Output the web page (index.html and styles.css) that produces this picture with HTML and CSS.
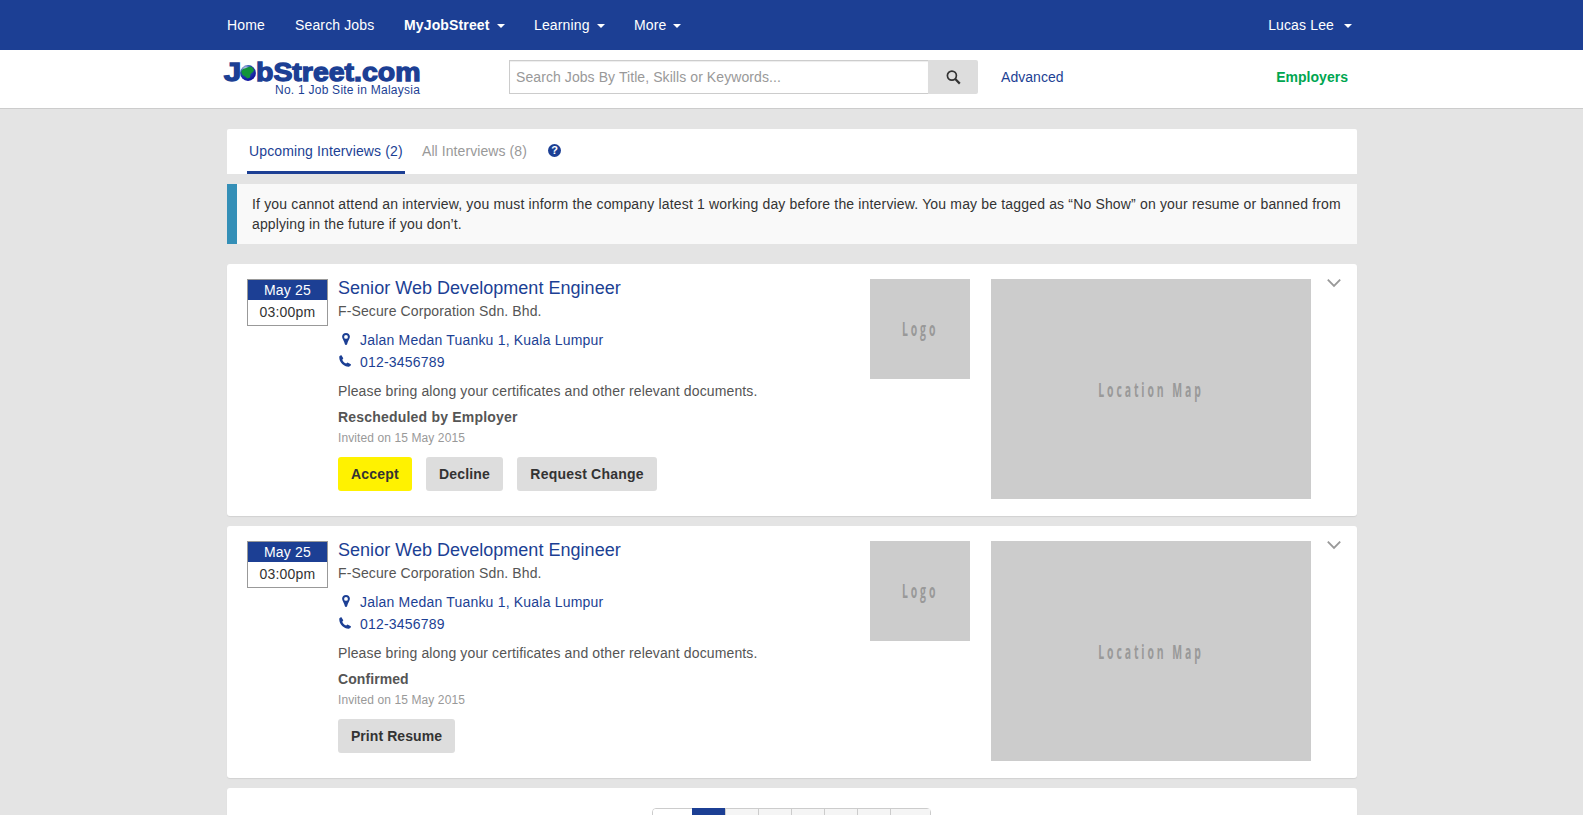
FILE: index.html
```html
<!DOCTYPE html>
<html lang="en">
<head>
<meta charset="utf-8">
<title>My Interviews - JobStreet.com</title>
<link rel="stylesheet" href="styles.css">
</head>
<body>
<svg class="defs" width="0" height="0">
  <symbol id="pin" viewBox="0 0 8 12"><path fill-rule="evenodd" d="M4 0C1.700 0 .1 1.700.1 3.800.1 6 2.300 7.800 2.900 11.300c.1.9 2.100.9 2.200 0C5.700 7.800 7.900 6 7.900 3.800 7.900 1.700 6.300 0 4 0zM4 2a1.900 1.900 0 1 1 0 3.800A1.900 1.900 0 0 1 4 2z"/></symbol>
  <symbol id="phone" viewBox="0 0 12 12"><path d="M.4 1.200 2.200.1 4.300 3.300 3.300 4.700c.5 1.600 2 3.100 3.900 3.800l1.300-1.100L11.900 9.300c.2 1.100-.9 2.200-2 2.400C5 12-.6 6.400.4 1.200z"/></symbol>
  <symbol id="chevron" viewBox="0 0 14 9"><path d="M.8.6 7 6.900 13.200.6" fill="none" stroke="#999" stroke-width="1.800"/></symbol>
</svg>
<nav class="topbar">
  <div class="wrap topbar-row">
    <a class="nav home">Home</a>
    <a class="nav search-jobs">Search Jobs</a>
    <a class="nav mine">MyJobStreet<i class="caret"></i></a>
    <a class="nav learning">Learning<i class="caret"></i></a>
    <a class="nav more">More<i class="caret"></i></a>
    <a class="nav user">Lucas Lee<i class="caret"></i></a>
  </div>
</nav>
<header class="header">
  <div class="wrap header-row">
    <svg class="brand" width="200" height="40" viewBox="0 0 200 40">
      <defs><radialGradient id="sea" cx=".35" cy=".25" r=".8"><stop offset="0" stop-color="#dfe8f5"/><stop offset=".4" stop-color="#2a4fae"/><stop offset="1" stop-color="#0a0a9c"/></radialGradient></defs>
      <g class="brand-name"><text x=".7" y="22.700" textLength="17.500" lengthAdjust="spacingAndGlyphs">J</text><text x="33" y="22.700" textLength="164.500" lengthAdjust="spacingAndGlyphs">bStreet.com</text></g>
      <circle cx="25" cy="15" r="7.900" fill="url(#sea)"/>
      <path d="M18.200 13.500 20 11l3-1 4-1.500 2.500 1 1.500 3-1.500 2-2 1.500-.5 3.500-2.500 1-3-2.500-2-1z" fill="#12953a"/>
      <text class="brand-tag" x="52" y="36.300" textLength="145">No. 1 Job Site in Malaysia</text>
    </svg>
    <div class="search">
      <span class="search-input">Search Jobs By Title, Skills or Keywords...</span>
      <span class="search-btn"><svg width="15" height="15" viewBox="0 0 15 15" fill="none" stroke="#333"><circle cx="5.900" cy="5.600" r="4.500" stroke-width="1.700"/><path d="M9 8.800 13.800 13.600" stroke-width="2.200"/></svg></span>
    </div>
    <a class="advanced">Advanced</a>
    <a class="employers">Employers</a>
  </div>
</header>
<main class="wrap">
  <div class="tabs">
    <a class="tab active">Upcoming Interviews (2)</a>
    <a class="tab">All Interviews (8)</a>
    <span class="help">?</span>
  </div>
  <p class="notice">If you cannot attend an interview, you must inform the company latest 1 working day before the interview. You may be tagged as “No Show” on your resume or banned from<br><span class="notice-end">applying in the future if you don’t.</span></p>

  <section class="card">
    <div class="date"><b class="day">May 25</b><span class="time">03:00pm</span></div>
    <div class="info">
      <h2 class="title">Senior Web Development Engineer</h2>
      <div class="company">F-Secure Corporation Sdn. Bhd.</div>
      <a class="contact place"><span class="ico"><svg width="8" height="12"><use href="#pin"/></svg></span>Jalan Medan Tuanku 1, Kuala Lumpur</a>
      <a class="contact tel"><span class="ico"><svg width="12" height="12"><use href="#phone"/></svg></span>012-3456789</a>
      <div class="note">Please bring along your certificates and other relevant documents.</div>
      <div class="status">Rescheduled by Employer</div>
      <div class="invited">Invited on 15 May 2015</div>
      <div class="actions"><button class="btn primary accept">Accept</button><button class="btn decline">Decline</button><button class="btn change">Request Change</button></div>
    </div>
    <div class="logo-box"><span class="ph">Logo</span></div>
    <div class="map-box"><span class="ph">Location Map</span></div>
    <svg class="toggle" width="14" height="9"><use href="#chevron"/></svg>
  </section>

  <section class="card">
    <div class="date"><b class="day">May 25</b><span class="time">03:00pm</span></div>
    <div class="info">
      <h2 class="title">Senior Web Development Engineer</h2>
      <div class="company">F-Secure Corporation Sdn. Bhd.</div>
      <a class="contact place"><span class="ico"><svg width="8" height="12"><use href="#pin"/></svg></span>Jalan Medan Tuanku 1, Kuala Lumpur</a>
      <a class="contact tel"><span class="ico"><svg width="12" height="12"><use href="#phone"/></svg></span>012-3456789</a>
      <div class="note">Please bring along your certificates and other relevant documents.</div>
      <div class="status confirmed">Confirmed</div>
      <div class="invited">Invited on 15 May 2015</div>
      <div class="actions"><button class="btn print">Print Resume</button></div>
    </div>
    <div class="logo-box"><span class="ph">Logo</span></div>
    <div class="map-box"><span class="ph">Location Map</span></div>
    <svg class="toggle" width="14" height="9"><use href="#chevron"/></svg>
  </section>

  <section class="card pager-card">
    <div class="pager"><i class="pg first"></i><i class="pg current"></i><i class="pg"></i><i class="pg"></i><i class="pg"></i><i class="pg"></i><i class="pg"></i><i class="pg last"></i></div>
  </section>
</main>
</body>
</html>
```
FILE: styles.css
```css
* { box-sizing: border-box; }
html { overflow: hidden; }
body { margin: 0; height: 815px; overflow: hidden; background: #e4e4e4; color: #333; font: 14px/20px "Liberation Sans", Arial, sans-serif; letter-spacing: .2px; }
.defs { display: block; }
.wrap { width: 1130px; margin-left: 227px; }

.topbar { height: 50px; background: #1c3f94; color: #fff; }
.topbar-row { display: flex; padding-top: 15px; letter-spacing: .14px; }
.nav { display: flex; align-items: center; white-space: nowrap; }
.home { width: 68px; }
.search-jobs { width: 109px; }
.mine { width: 130px; font-weight: bold; }
.learning { width: 100px; }
.user { margin-left: auto; padding-right: 5px; }
.user .caret { margin-left: 10px; }
.caret { margin: 2px 0 0 7px; border: 4px solid transparent; border-top-color: #fff; border-bottom: 0; }

.header { height: 59px; background: #fff; border-bottom: 1px solid #ccc; }
.header-row { display: flex; padding-top: 8px; }
.brand { margin-left: -4px; }
.brand-name { font-size: 26px; font-weight: bold; fill: #1c3f94; stroke: #1c3f94; stroke-width: 1.3px; letter-spacing: 0; }
.brand-tag { font-size: 12px; fill: #1c3f94; }
.search { display: flex; width: 469px; height: 34px; margin: 2px 0 0 86px; }
.search-input { flex: 1; padding: 6px; border: 1px solid #ccc; border-right: 0; color: #999; letter-spacing: .08px; box-shadow: inset 0 1px 1px rgba(0,0,0,.075); }
.search-btn { display: flex; align-items: center; justify-content: center; width: 50px; background: #ddd; border-radius: 0 2px 2px 0; }
.advanced { margin: 9px 0 0 23px; color: #1c3f94; letter-spacing: .05px; }
.employers { margin: 9px 9px 0 auto; color: #00a651; font-weight: bold; letter-spacing: .03px; }

.tabs { display: flex; height: 45px; margin-top: 20px; padding-left: 20px; background: #fff; border-radius: 2px 2px 0 0; letter-spacing: .12px; }
.tab { width: 158px; height: 45px; padding: 12px 0 0 2px; color: #999; white-space: nowrap; }
.tab.active { color: #1c3f94; border-bottom: 3px solid #1c3f94; }
.tab + .tab { width: 128px; margin-left: 15px; letter-spacing: .08px; }
.help { width: 13px; height: 13px; margin: 15px 0 0 0; border-radius: 50%; background: #1c3f94; color: #fff; font: bold 11px/13px "Liberation Sans", sans-serif; text-align: center; letter-spacing: 0; }
.notice { height: 60px; margin: 10px 0 20px; padding: 10px 0 0 15px; border-left: 10px solid #348fb7; background: #f9f9f9; letter-spacing: .165px; white-space: nowrap; }
.notice-end { letter-spacing: .12px; }

.card { display: flex; align-items: flex-start; height: 252px; margin-bottom: 10px; padding: 15px 0 0 20px; background: #fff; border-radius: 3px; box-shadow: 0 1px 1px rgba(0,0,0,.08); }
.date { width: 81px; height: 47px; border: 1px solid #999; text-align: center; }
.day { display: block; height: 20px; background: #1c3f94; color: #fff; font-weight: normal; }
.time { display: block; padding-top: 2px; }
.info { width: 532px; margin-left: 10px; color: #555; }
.title { margin: 0 0 4px; color: #1c3f94; font-size: 18px; font-weight: normal; line-height: 18px; letter-spacing: .03px; }
.company { letter-spacing: .12px; }
.contact { display: flex; color: #1c3f94; }
.place { margin: 9px 0 2px; }
.ico { width: 22px; height: 12px; margin-top: 3px; padding-left: .5px; line-height: 0; fill: #1c3f94; }
.place .ico { padding-left: 4px; }
.note { margin-top: 9px; letter-spacing: .13px; }
.status { margin-top: 6px; font-weight: bold; }
.confirmed { letter-spacing: .08px; }
.invited { margin-top: 1px; color: #999; font-size: 12px; letter-spacing: .1px; }
.actions { display: flex; gap: 14px; margin-top: 9px; }
.btn { height: 34px; padding: 0; border: 0; border-radius: 3px; background: #ddd; color: #333; font: bold 14px/20px "Liberation Sans", Arial, sans-serif; letter-spacing: .2px; }
.primary { background: #fff200; }
.accept { width: 74px; }
.decline { width: 77px; }
.change { width: 140px; }
.print { width: 117px; letter-spacing: .08px; }
.logo-box, .map-box { display: flex; align-items: center; justify-content: center; background: #ccc; color: #999; }
.logo-box { width: 100px; height: 100px; }
.map-box { width: 320px; height: 220px; margin-left: 21px; padding-top: 2px; }
.ph { font: bold 19px/24px "Open Sans", sans-serif; letter-spacing: 5.3px; white-space: nowrap; transform: scaleX(.55); }
.toggle { margin-left: 16px; }

.pager-card { height: 27px; margin-bottom: 0; padding: 20px 0 0 425px; overflow: hidden; border-radius: 3px 3px 0 0; }
.pager { display: flex; height: 34px; border: 1px solid #ccc; border-radius: 4px; }
.pg { width: 33px; border-left: 1px solid #ccc; background: #f5f5f5; }
.first { width: 39px; border: 0; background: #fff; border-radius: 3px; }
.current { margin-top: -1px; background: #1c3f94; border-color: #1c3f94; }
.last { width: 40px; }
```
